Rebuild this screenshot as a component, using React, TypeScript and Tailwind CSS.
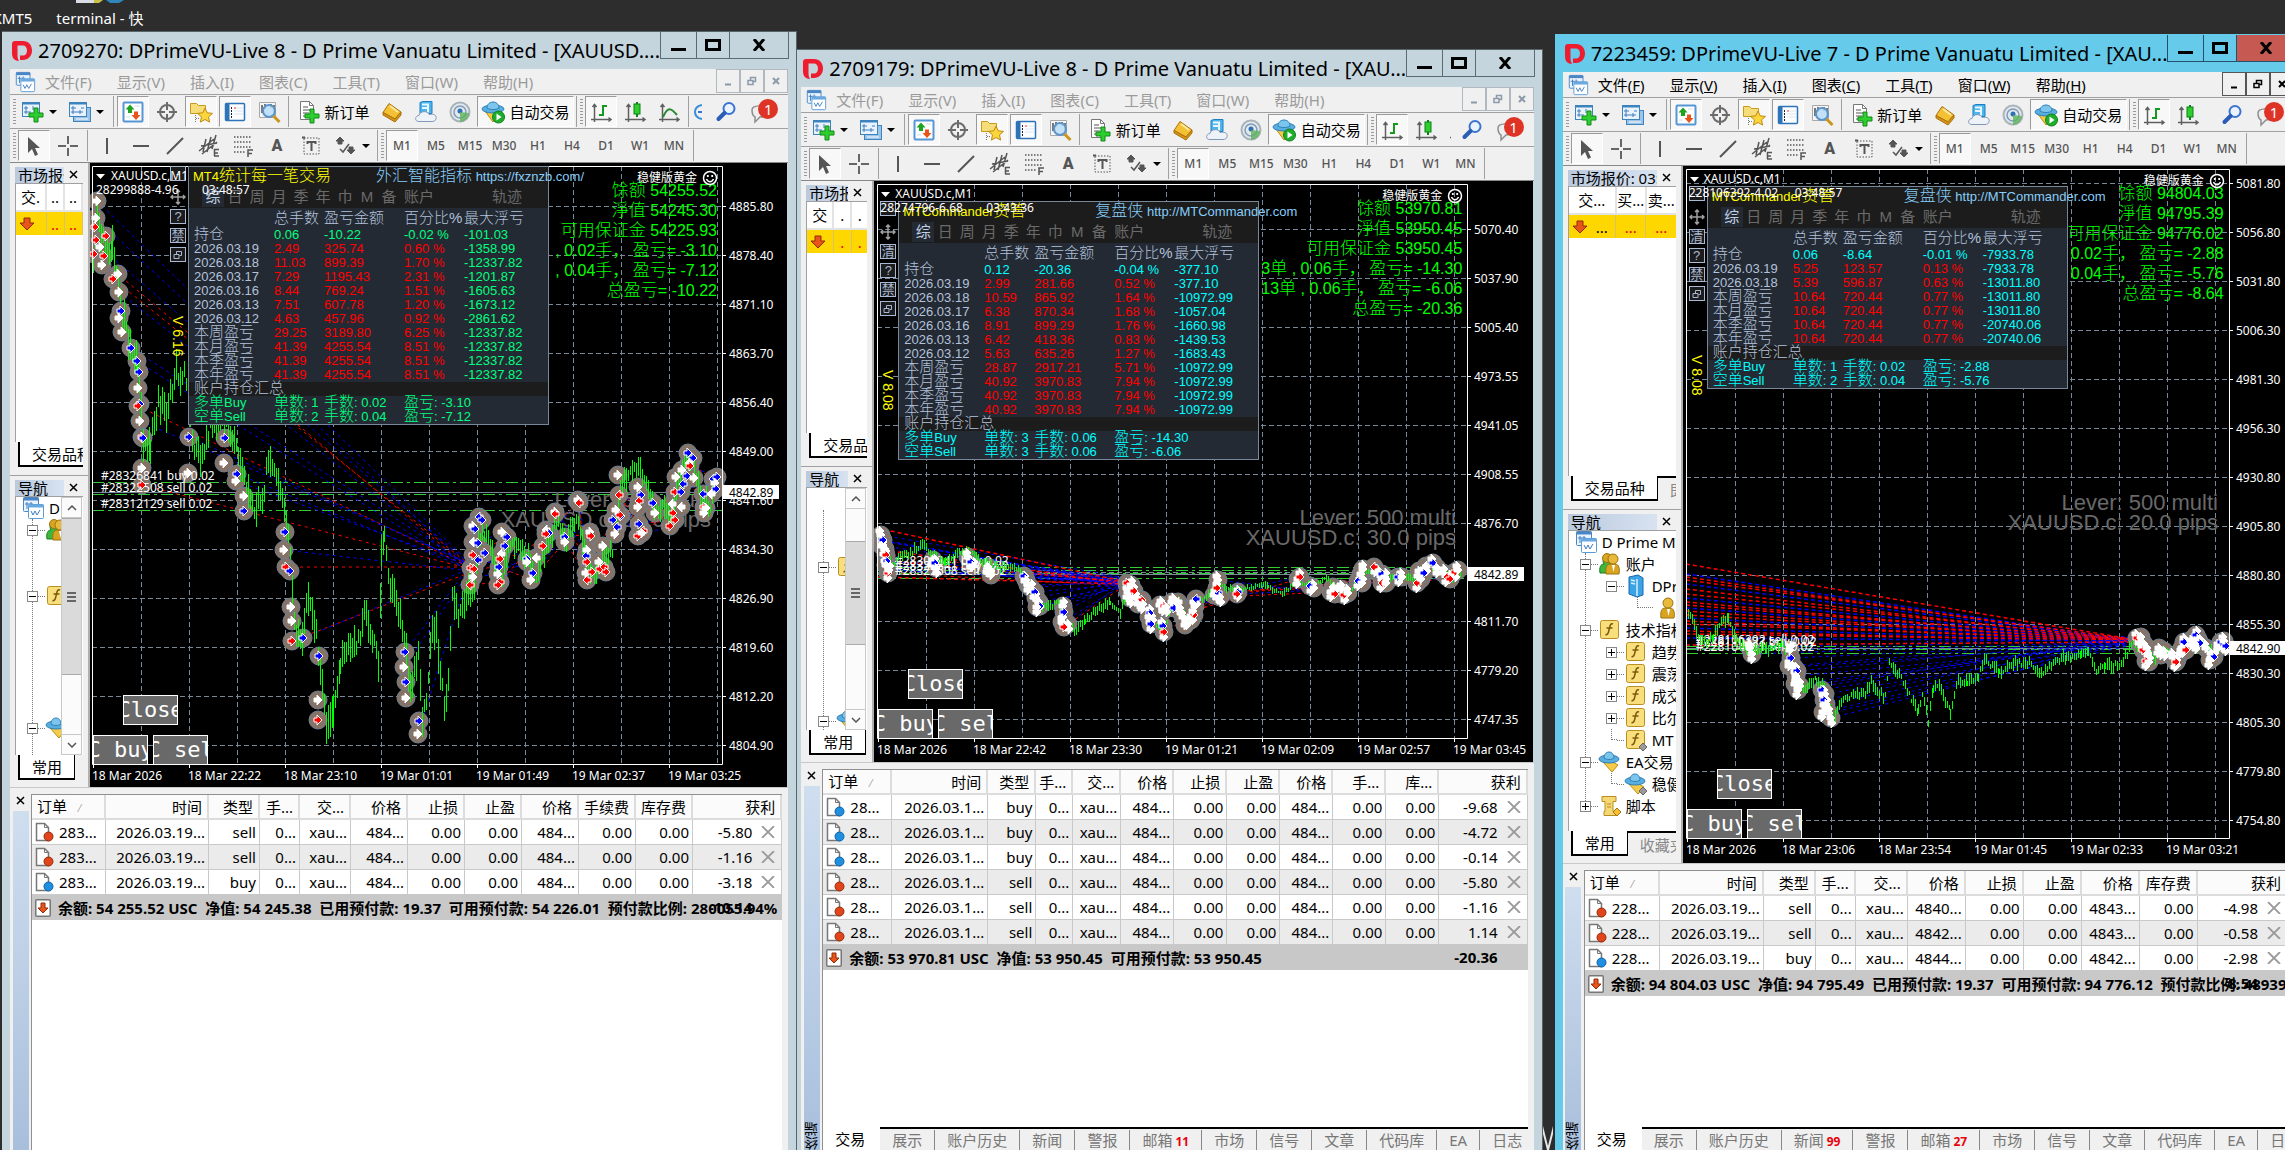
import React from 'react';
import clsx from 'clsx';

type Hue = 'b' | 'r' | 'w';

interface Marker {
  x: number;
  y: number;
  hue: Hue;
}

interface ChartData {
  origin: [number, number];
  frame: { left: number; top: number; right: number; bottom: number };
  grid: { x: number; y: number };
  prices: string[];
  times: string[];
  timeStart: number;
  bid: { y: number; label: string };
  orderLines: number[];
  orderLabels: { y: number; text: string }[];
  orderX: number;
  path: string;
  spread: number;
  markers: string;
  dense: boolean;
  target: [number, number];
  fan: number[];
  lever: string[];
  leverY: number;
}

interface StatRow {
  label: string;
  lots: string;
  profit: string;
  percent: string;
  drawdown: string;
}

interface PanelData {
  place: string;
  title: string;
  brand: string;
  brandPlace: string;
  url: string;
  version: string;
  accent: string;
  tools: string[];
  rows: StatRow[];
  totals: string[][];
}

interface TreeNode {
  level: 0 | 1 | 2 | 3;
  icon?: 'terminal' | 'people' | 'server' | 'user' | 'func' | 'custom' | 'ea' | 'robot' | 'script';
  label?: string;
  sign?: '+' | '-';
}

interface Terminal {
  columns: { name: string; width: string }[];
  rows: string[][];
  summary: string;
  total: string;
  tabs: { name: string; count?: number }[];
}

interface WindowData {
  title: string;
  active: boolean;
  shell: string;
  body: string;
  dock: string;
  market: string;
  marketTitle: string;
  marketHead: string[];
  marketRow: string[];
  marketCols: string[];
  marketTabs: string[];
  tree: TreeNode[];
  treeOffset: string;
  thumb: string | null;
  navTabs: string[];
  chart: ChartData;
  panel: PanelData;
  symbol: string;
  ticket: string;
  clock: string;
  account: string[];
  terminal: Terminal;
}

const stat = (line: string): StatRow => {
  const [label, lots, profit, percent, drawdown] = line.split('|');
  return { label, lots, profit, percent, drawdown };
};

const cols = (spec: [string, string][]) => spec.map(([name, width]) => ({ name, width }));

const fullTree: TreeNode[] = [
  { level: 0, icon: 'terminal', label: 'D Prime MT4' },
  { level: 1, icon: 'people', label: '账户', sign: '-' },
  { level: 2, icon: 'server', label: 'DPrime', sign: '-' },
  { level: 3, icon: 'user' },
  { level: 1, icon: 'func', label: '技术指标', sign: '-' },
  { level: 2, icon: 'func', label: '趋势', sign: '+' },
  { level: 2, icon: 'func', label: '震荡', sign: '+' },
  { level: 2, icon: 'func', label: '成交', sign: '+' },
  { level: 2, icon: 'func', label: '比尔', sign: '+' },
  { level: 2, icon: 'custom', label: 'MT' },
  { level: 1, icon: 'ea', label: 'EA交易', sign: '-' },
  { level: 2, icon: 'robot', label: '稳健' },
  { level: 1, icon: 'script', label: '脚本', sign: '+' },
];

const bottomTabs = (news?: number, mail?: number) => [
  { name: '交易' },
  { name: '展示' },
  { name: '账户历史' },
  { name: '新闻', count: news },
  { name: '警报' },
  { name: '邮箱', count: mail },
  { name: '市场' },
  { name: '信号' },
  { name: '文章' },
  { name: '代码库' },
  { name: 'EA' },
  { name: '日志' },
];

const windows: WindowData[] = [
  {
    title: '2709270: DPrimeVU-Live 8 - D Prime Vanuatu Limited - [XAUUSD....',
    active: false,
    shell: 'z-10 ml-[2px] mt-[31px] flex-[795]',
    body: 'h-[624px]',
    dock: 'w-[80px]',
    market: 'h-[313px]',
    marketTitle: '市场报价',
    marketHead: ['交.', '..', '..'],
    marketRow: ['', '..', '..'],
    marketCols: ['w-[30px]', 'w-[18px]', 'w-[18px]'],
    marketTabs: ['交易品种'],
    tree: [
      { level: 0, icon: 'terminal', label: 'D' },
      { level: 1, icon: 'people', sign: '-' },
      { level: 3 },
      { level: 3 },
      { level: 1, icon: 'func', sign: '-' },
      { level: 3 },
      { level: 3 },
      { level: 3 },
      { level: 3 },
      { level: 3 },
      { level: 1, icon: 'ea', sign: '-' },
      { level: 3 },
    ],
    treeOffset: 'pt-0',
    thumb: 'h-[157px]',
    navTabs: ['常用'],
    chart: {
      origin: [90, 163],
      frame: { left: 92, top: 166, right: 722, bottom: 764 },
      grid: { x: 141, y: 206 },
      prices: ['4885.80', '4878.40', '4871.10', '4863.70', '4856.40', '4849.00', '4841.60', '4834.30', '4826.90', '4819.60', '4812.20', '4804.90'],
      times: ['18 Mar 2026', '18 Mar 22:22', '18 Mar 23:10', '19 Mar 01:01', '19 Mar 01:49', '19 Mar 02:37', '19 Mar 03:25'],
      timeStart: 93,
      bid: { y: 492, label: '4842.89' },
      orderLines: [482, 494, 510],
      orderLabels: [
        { y: 480, text: '#28326841 buy 0.02' },
        { y: 492, text: '#28322508 sell 0.02' },
        { y: 508, text: '#28312129 sell 0.02' },
      ],
      orderX: 101,
      path: '93,260 97,215 103,240 112,250 118,285 122,315 130,345 137,365 141,400 143,440 150,445 158,400 166,415 176,370 188,380 192,440 200,460 210,425 218,415 228,425 238,455 246,485 254,505 262,500 268,460 274,470 282,500 290,550 294,620 300,645 308,595 316,635 322,680 326,725 333,705 340,660 350,645 360,640 364,605 372,635 378,660 381,560 384,540 390,590 396,600 404,640 410,690 418,650 422,725 426,700 430,640 436,625 440,680 444,705 448,680 452,590 458,620 466,590 474,590 478,540 486,530 494,560 502,580 508,540 516,545 528,560 536,580 548,540 558,520 566,540 576,520 584,550 592,575 602,560 612,550 620,490 626,475 632,465 640,470 648,490 656,510 664,505 670,520 678,480 686,460 694,465 702,500 710,505 716,480',
      spread: 32,
      markers:
        '97,201w 96,218w 95,227r 96,240r 106,236r 100,247w 94,254r 104,256r 102,265w 118,274w 113,279r 119,292w 121,311b 119,318w 122,332w 131,348b 137,361b 139,372b 138,388w 140,404b 138,406r 140,421w 142,437r 143,438b 142,468w 142,485r 189,437b 188,473w 225,438b 224,463w 237,474b 236,481w 244,496w 244,511b 285,532b 284,550w 286,567r 290,571b 291,607w 292,621w 292,641r 303,638b 319,656b 318,700w 318,720r 405,652b 404,667w 406,682b 406,698w 419,721b 418,734w 479,517b 482,520b 473,526w 475,529b 473,542w 478,543b 473,555r 485,553b 478,560b 471,568r 474,569r 473,577w 470,585r 502,532w 507,537b 505,546b 501,554w 500,559r 499,567b 498,574w 500,582r 498,585r 527,559b 527,562w 536,558w 533,573b 531,580w 543,546r 546,530w 549,533b 546,534r 555,512w 555,514r 565,537b 565,542w 578,500w 579,503r 590,532w 591,536r 587,550w 586,556b 587,562r 586,573w 592,572r 587,580r 603,546w 599,562w 600,569r 604,567r 606,572r 613,520b 621,516b 617,527b 615,534w 620,515r 616,510w 619,495r 618,475w 638,487w 641,495b 639,501r 638,507w 639,524b 638,536r 643,531r 642,533w 653,503b 655,513w 672,504w 673,513r 675,520r 670,526r 681,507w 676,477w 675,492r 681,492b 683,484b 682,470w 688,453b 693,458b 689,463w 690,466r 687,476b 694,478w 703,494b 704,507r 706,508w 704,513w 713,479b 717,477b 715,483w 716,489b 711,494w',
      dense: false,
      target: [471, 568],
      fan: [],
      lever: ['Lever: 500 multi', 'XAUUSD.c: 30.0 pips'],
      leverY: 507,
    },
    panel: {
      place: 'left-[80px] top-[3px]',
      title: 'MT4统计每一笔交易',
      brand: '外汇智能指标',
      brandPlace: 'left-[187px]',
      url: 'https://fxznzb.com/',
      version: 'V 6.16',
      accent: 'text-[#00ff7f]',
      tools: ['-', 'move', '?', '禁', 'restore'],
      rows: [
        '持仓|0.06|-10.22|-0.02 %|-101.03',
        '2026.03.19|2.49|325.74|0.60 %|-1358.99',
        '2026.03.18|11.03|899.39|1.70 %|-12337.82',
        '2026.03.17|7.29|1195.43|2.31 %|-1201.87',
        '2026.03.16|8.44|769.24|1.51 %|-1605.63',
        '2026.03.13|7.51|607.78|1.20 %|-1673.12',
        '2026.03.12|4.63|457.96|0.92 %|-2861.62',
        '本周盈亏|29.25|3189.80|6.25 %|-12337.82',
        '本月盈亏|41.39|4255.54|8.51 %|-12337.82',
        '本季盈亏|41.39|4255.54|8.51 %|-12337.82',
        '本年盈亏|41.39|4255.54|8.51 %|-12337.82',
      ].map(stat),
      totals: [
        ['多单Buy', '单数: 1', '手数: 0.02', '盈亏: -3.10'],
        ['空单Sell', '单数: 2', '手数: 0.04', '盈亏: -7.12'],
      ],
    },
    symbol: 'XAUUSD.c,M1',
    ticket: '28299888-4.96',
    clock: '03:48:57',
    account: ['馀额 54255.52', '淨值 54245.30', '可用保证金 54225.93', ', 0.02手， 盈亏= -3.10', ', 0.04手， 盈亏= -7.12', '总盈亏= -10.22'],
    terminal: {
      columns: cols([
        ['订单', 'w-[74px]'],
        ['时间', 'w-[103px]'],
        ['类型', 'w-[51px]'],
        ['手...', 'w-[40px]'],
        ['交...', 'w-[51px]'],
        ['价格', 'w-[57px]'],
        ['止损', 'w-[57px]'],
        ['止盈', 'w-[57px]'],
        ['价格', 'w-[57px]'],
        ['手续费', 'w-[57px]'],
        ['库存费', 'w-[57px]'],
        ['获利', 'w-auto'],
      ]),
      rows: [
        ['283...', '2026.03.19...', 'sell', '0...', 'xau...', '484...', '0.00', '0.00', '484...', '0.00', '0.00', '-5.80'],
        ['283...', '2026.03.19...', 'sell', '0...', 'xau...', '484...', '0.00', '0.00', '484...', '0.00', '0.00', '-1.16'],
        ['283...', '2026.03.19...', 'buy', '0...', 'xau...', '484...', '0.00', '0.00', '484...', '0.00', '0.00', '-3.18'],
      ],
      summary: '余额: 54 255.52 USC  净值: 54 245.38  已用预付款: 19.37  可用预付款: 54 226.01  预付款比例: 280055.94%',
      total: '-10.14',
      tabs: [],
    },
  },
  {
    title: '2709179: DPrimeVU-Live 8 - D Prime Vanuatu Limited - [XAU...',
    active: false,
    shell: '-ml-[4px] mt-[49px] flex-[749]',
    body: 'h-[581px]',
    dock: 'w-[73px]',
    market: 'h-[286px]',
    marketTitle: '市场报价',
    marketHead: ['交', '.', '.'],
    marketRow: ['', '.', '.'],
    marketCols: ['w-[26px]', 'w-[18px]', 'w-[17px]'],
    marketTabs: ['交易品种'],
    tree: [
      { level: 3 },
      { level: 3 },
      { level: 3 },
      { level: 1, icon: 'func', sign: '-' },
      { level: 3 },
      { level: 3 },
      { level: 3 },
      { level: 3 },
      { level: 3 },
      { level: 3 },
      { level: 1, icon: 'ea', sign: '-' },
    ],
    treeOffset: 'pt-[2px]',
    thumb: 'mt-[32px] h-[104px]',
    navTabs: ['常用'],
    chart: {
      origin: [874, 181],
      frame: { left: 877, top: 184, right: 1467, bottom: 738 },
      grid: { x: 926, y: 229 },
      prices: ['5070.40', '5037.90', '5005.40', '4973.55', '4941.05', '4908.55', '4876.70', '', '4811.70', '4779.20', '4747.35'],
      times: ['18 Mar 2026', '18 Mar 22:42', '18 Mar 23:30', '19 Mar 01:21', '19 Mar 02:09', '19 Mar 02:57', '19 Mar 03:45'],
      timeStart: 878,
      bid: { y: 574, label: '4842.89' },
      orderLines: [567, 570, 573, 578],
      orderLabels: [
        { y: 565, text: '#28309341 buy 0.02' },
        { y: 570, text: '#28326841 buy 0.02' },
        { y: 575, text: '#28322508 sell 0.02' },
      ],
      orderX: 895,
      path: '878,535 886,550 892,565 900,556 912,552 922,542 930,555 945,562 960,552 966,550 980,560 1000,567 1020,570 1032,592 1042,606 1052,606 1058,600 1064,620 1074,630 1085,620 1095,610 1110,602 1120,612 1130,582 1140,600 1150,615 1163,636 1172,605 1178,600 1188,622 1196,600 1206,598 1214,585 1235,590 1255,586 1268,586 1282,594 1296,582 1312,586 1326,578 1340,592 1350,592 1362,575 1376,568 1390,578 1402,576 1416,580 1430,566 1442,570 1452,578 1462,574',
      spread: 10,
      markers:
        '881,535w 883,540b 882,546w 885,549w 886,555r 887,561b 886,565w 888,573r 889,570w 933,560w 935,563b 936,568w 968,557w 971,562b 973,566w 988,567w 991,575w 1024,576b 1026,580w 1028,585w 1031,588w 1035,592b 1036,598w 1039,602w 1040,606b 1037,607w 1063,606w 1064,612b 1062,622w 1068,624w 1064,627r 1127,583r 1131,585w 1128,592w 1134,591r 1130,598w 1137,598w 1142,600r 1138,604w 1143,604w 1150,613b 1149,617w 1153,620w 1151,624b 1160,605w 1164,606r 1163,611w 1166,607w 1163,626b 1164,632r 1172,602w 1178,602w 1174,608b 1180,608w 1183,617w 1187,620w 1185,625w 1194,615r 1191,620w 1196,599b 1195,606w 1193,611w 1214,595w 1218,593b 1217,588r 1220,597w 1218,580w 1238,592b 1237,594r 1298,579w 1300,577r 1310,586b 1314,588w 1331,592w 1335,594r 1333,587w 1341,589w 1344,595r 1348,593w 1358,581b 1362,583w 1361,574w 1363,569w 1374,567r 1378,573w 1382,574b 1385,577w 1382,583r 1386,583w 1398,577b 1402,577w 1417,583r 1421,579w 1419,571w 1424,573b 1426,566w 1433,563b 1437,568w 1443,573w 1447,577r 1450,579r 1455,572r 1458,570w',
      dense: true,
      target: [1127, 582],
      fan: [528, 540, 549, 560, 568, 577],
      lever: ['Lever: 500 multi', 'XAUUSD.c: 30.0 pips'],
      leverY: 525,
    },
    panel: {
      place: 'left-[6px] top-[20px]',
      title: 'MTCommander资管',
      brand: '复盘侠',
      brandPlace: 'left-[196px]',
      url: 'http://MTCommander.com',
      version: 'V 8.08',
      accent: 'text-[#00ffff]',
      tools: ['-', 'move', '清', '?', '禁', 'restore'],
      rows: [
        '持仓|0.12|-20.36|-0.04 %|-377.10',
        '2026.03.19|2.99|281.66|0.52 %|-377.10',
        '2026.03.18|10.59|865.92|1.64 %|-10972.99',
        '2026.03.17|6.38|870.34|1.68 %|-1057.04',
        '2026.03.16|8.91|899.29|1.76 %|-1660.98',
        '2026.03.13|6.42|418.36|0.83 %|-1439.53',
        '2026.03.12|5.63|635.26|1.27 %|-1683.43',
        '本周盈亏|28.87|2917.21|5.71 %|-10972.99',
        '本月盈亏|40.92|3970.83|7.94 %|-10972.99',
        '本季盈亏|40.92|3970.83|7.94 %|-10972.99',
        '本年盈亏|40.92|3970.83|7.94 %|-10972.99',
      ].map(stat),
      totals: [
        ['多单Buy', '单数: 3', '手数: 0.06', '盈亏: -14.30'],
        ['空单Sell', '单数: 3', '手数: 0.06', '盈亏: -6.06'],
      ],
    },
    symbol: 'XAUUSD.c,M1',
    ticket: '28274796-6.68',
    clock: '03:43:36',
    account: ['馀额 53970.81', '淨值 53950.45', '可用保证金 53950.45', '3单 , 0.06手， 盈亏= -14.30', '13单 , 0.06手， 盈亏= -6.06', '总盈亏= -20.36'],
    terminal: {
      columns: cols([
        ['订单', 'w-[69px]'],
        ['时间', 'w-[96px]'],
        ['类型', 'w-[48px]'],
        ['手...', 'w-[37px]'],
        ['交...', 'w-[48px]'],
        ['价格', 'w-[53px]'],
        ['止损', 'w-[53px]'],
        ['止盈', 'w-[53px]'],
        ['价格', 'w-[53px]'],
        ['手...', 'w-[53px]'],
        ['库...', 'w-[53px]'],
        ['获利', 'w-auto'],
      ]),
      rows: [
        ['buy', '-9.68'],
        ['buy', '-4.72'],
        ['buy', '-0.14'],
        ['sell', '-5.80'],
        ['sell', '-1.16'],
        ['sell', '1.14'],
      ].map(([side, profit]) => ['28...', '2026.03.1...', side, '0...', 'xau...', '484...', '0.00', '0.00', '484...', '0.00', '0.00', profit]),
      summary: '余额: 53 970.81 USC  净值: 53 950.45  可用预付款: 53 950.45',
      total: '-20.36',
      tabs: bottomTabs(undefined, 11),
    },
  },
  {
    title: '7223459: DPrimeVU-Live 7 - D Prime Vanuatu Limited - [XAU...',
    active: true,
    shell: '-mr-[18px] ml-[12px] mt-[34px] flex-[749]',
    body: 'h-[697px]',
    dock: 'w-[120px]',
    market: 'h-[344px]',
    marketTitle: '市场报价: 03:48',
    marketHead: ['交...', '买...', '卖...'],
    marketRow: ['...', '...', '...'],
    marketCols: ['w-[47px]', 'w-[30px]', 'w-[31px]'],
    marketTabs: ['交易品种', '即时图'],
    tree: fullTree,
    treeOffset: 'pt-0',
    thumb: null,
    navTabs: ['常用', '收藏夹'],
    chart: {
      origin: [1682, 166],
      frame: { left: 1685, top: 169, right: 2228, bottom: 838 },
      grid: { x: 1734, y: 183 },
      prices: ['5081.80', '5056.80', '5031.80', '5006.30', '4981.30', '4956.30', '4930.80', '4905.80', '4880.80', '4855.30', '4830.30', '4805.30', '4779.80', '4754.80'],
      times: ['18 Mar 2026', '18 Mar 23:06', '18 Mar 23:54', '19 Mar 01:45', '19 Mar 02:33', '19 Mar 03:21'],
      timeStart: 1686,
      bid: { y: 648, label: '4842.90' },
      orderLines: [646, 649, 653],
      orderLabels: [
        { y: 644, text: '#228106392 sell 0.02' },
        { y: 646, text: '#228110123 buy 0.02' },
        { y: 651, text: '#228104081 sell 0.02' },
      ],
      orderX: 1695,
      path: '1687,612 1695,632 1703,642 1712,636 1720,622 1727,618 1735,640 1748,648 1765,650 1780,645 1788,652 1796,680 1804,690 1815,680 1823,690 1832,718 1842,700 1854,694 1864,695 1870,682 1878,692 1884,697 1888,664 1896,672 1904,685 1910,700 1917,712 1921,692 1927,722 1932,688 1938,684 1949,712 1957,680 1966,682 1977,676 1983,660 1998,672 2014,662 2028,664 2040,674 2054,660 2065,657 2080,655 2087,652 2095,670 2104,666 2120,665 2130,644 2142,650 2154,658 2166,650 2176,660 2184,645 2196,635 2206,650 2216,648 2226,645',
      spread: 12,
      markers:
        '1749,648w 1751,654w 1789,650w 1790,658b 1788,666w 1793,667w 1796,671b 1795,676w 1794,684w 1797,690w 1799,686w 1821,690b 1824,694w 1823,700b 1825,704w 1822,712w 1828,713w 1830,718w 2136,638r 2140,637w 2138,643w 2143,644w 2142,650r 2146,648w 2147,655w 2145,661r 2148,662w 2158,648w 2160,655w 2163,651w 2172,657w 2176,660w 2179,654w 2175,662r 2183,642b 2181,648w 2185,650r 2190,640w 2195,635b 2197,639w 2199,643b 2194,644w 2205,648w 2210,653w 2213,657b 2209,660w 2217,648w 2220,642b 2223,641w 2225,646b',
      dense: true,
      target: [2136, 640],
      fan: [564, 574, 577, 580, 584, 589, 594, 598, 602, 605, 608, 611, 615, 618, 621, 624, 628, 631, 634, 638, 645],
      lever: ['Lever: 500 multi', 'XAUUSD.c: 20.0 pips'],
      leverY: 510,
    },
    panel: {
      place: 'left-[6px] top-[20px]',
      title: 'MTCommander资管',
      brand: '复盘侠',
      brandPlace: 'left-[196px]',
      url: 'http://MTCommander.com',
      version: 'V 8.08',
      accent: 'text-[#00ffff]',
      tools: ['-', 'move', '清', '?', '禁', 'restore'],
      rows: [
        '持仓|0.06|-8.64|-0.01 %|-7933.78',
        '2026.03.19|5.25|123.57|0.13 %|-7933.78',
        '2026.03.18|5.39|596.87|0.63 %|-13011.80',
        '本周盈亏|10.64|720.44|0.77 %|-13011.80',
        '本月盈亏|10.64|720.44|0.77 %|-13011.80',
        '本季盈亏|10.64|720.44|0.77 %|-20740.06',
        '本年盈亏|10.64|720.44|0.77 %|-20740.06',
      ].map(stat),
      totals: [
        ['多单Buy', '单数: 1', '手数: 0.02', '盈亏: -2.88'],
        ['空单Sell', '单数: 2', '手数: 0.04', '盈亏: -5.76'],
      ],
    },
    symbol: 'XAUUSD.c,M1',
    ticket: '228106392-4.02',
    clock: '03:48:57',
    account: ['馀额 94804.03', '淨值 94795.39', '可用保证金 94776.02', '0.02手， 盈亏= -2.88', '0.04手， 盈亏= -5.76', '总盈亏= -8.64'],
    terminal: {
      columns: cols([
        ['订单', 'w-[75px]'],
        ['时间', 'w-[104px]'],
        ['类型', 'w-[52px]'],
        ['手...', 'w-[40px]'],
        ['交...', 'w-[52px]'],
        ['价格', 'w-[58px]'],
        ['止损', 'w-[58px]'],
        ['止盈', 'w-[58px]'],
        ['价格', 'w-[58px]'],
        ['库存费', 'w-[58px]'],
        ['获利', 'w-auto'],
      ]),
      rows: [
        ['228...', '2026.03.19...', 'sell', '0...', 'xau...', '4840...', '0.00', '0.00', '4843...', '0.00', '-4.98'],
        ['228...', '2026.03.19...', 'sell', '0...', 'xau...', '4842...', '0.00', '0.00', '4843...', '0.00', '-0.58'],
        ['228...', '2026.03.19...', 'buy', '0...', 'xau...', '4844...', '0.00', '0.00', '4842...', '0.00', '-2.98'],
      ],
      summary: '余额: 94 804.03 USC  净值: 94 795.49  已用预付款: 19.37  可用预付款: 94 776.12  预付款比例: 489393%',
      total: '-8.54',
      tabs: bottomTabs(99, 27),
    },
  },
];

const menu = [
  ['文件', 'F'],
  ['显示', 'V'],
  ['插入', 'I'],
  ['图表', 'C'],
  ['工具', 'T'],
  ['窗口', 'W'],
  ['帮助', 'H'],
];

const frames = ['M1', 'M5', 'M15', 'M30', 'H1', 'H4', 'D1', 'W1', 'MN'];

const pressed = 'border border-t-[#9a9a9a] border-l-[#9a9a9a] border-r-white border-b-white bg-[#f8f8f8]';

/* ---------- icons ---------- */

const Svg = ({ size = 'h-6 w-6', children }: { size?: string; children: React.ReactNode }) => (
  <svg viewBox="0 0 24 24" fill="none" className={clsx('shrink-0', size)} aria-hidden="true">
    {children}
  </svg>
);

const Logo = () => (
  <svg viewBox="0 0 20 20" className="h-5 w-5 shrink-0" aria-hidden="true">
    <path fillRule="evenodd" d="M3 0h8c5.500 0 9 4 9 9.500S16 19 11 19H8v-4.500h3c2.600 0 4-2 4-5s-1.500-5-4-5H5.500v10c0 2 .5 4 1.500 5.500C2 19.500 0 17 0 12V3c0-2 1-3 3-3z" fill="#ee1c2e" />
  </svg>
);

const ChartWindows = ({ size }: { size?: string }) => (
  <Svg size={size}>
    <rect x="2.500" y="1.500" width="15" height="14" rx="1" fill="#e8f2fc" stroke="#4a86c5" />
    <path d="M2.500 3h15" stroke="#4a86c5" strokeWidth="3" />
    <path d="M6 6v7M4 8h8M10 6v4" stroke="#3f7cc0" />
    <rect x="7.500" y="8.500" width="15" height="14" rx="1" fill="#fff" stroke="#5b9bd8" />
    <path d="M7.500 10h15" stroke="#6aa8e0" strokeWidth="3" />
    <path d="M10 15l2 4 2-4 2 4 3-5" stroke="#3f7cc0" />
  </Svg>
);

const NewChart = () => (
  <Svg>
    <rect x="1.500" y="2.500" width="17" height="14" fill="#eaf3fb" stroke="#3d83bd" />
    <path d="M1 3.500h18" stroke="#3d83bd" strokeWidth="2" />
    <path d="M5 6v8M3 12h7M3 8h4M12 6v4" stroke="#3f7cc0" />
    <path d="M13 8h4v5h5v4h-5v5h-4v-5H8v-4h5z" fill="#2fce2f" stroke="#0f8a18" />
  </Svg>
);

const Profiles = () => (
  <Svg>
    <rect x="5.500" y="7.500" width="17" height="14" fill="#9cc4e8" stroke="#3d83bd" />
    <rect x="1.500" y="2.500" width="17" height="14" fill="#eaf3fb" stroke="#3d83bd" />
    <path d="M1 3.500h18" stroke="#3d83bd" strokeWidth="2" />
    <path d="M5 6v8M3 8h5M3 12h12M12 10v4M13 8h3" stroke="#3f7cc0" />
    <path d="M8 19h12" stroke="#fff" />
  </Svg>
);

const Quotes = () => (
  <Svg>
    <rect x="2.500" y="2.500" width="19" height="19" rx="1" fill="#fff" stroke="#5596d4" strokeWidth="2" />
    <path d="M9 4.500l4.500 5H11V13H7V9.500H4.500z" fill="#1da31d" />
    <path d="M15 20l-4.500-5H13v-3.500h4V15h2.500z" fill="#e8541a" />
    <path d="M14 6h5M5 17h4" stroke="#cfdce8" />
  </Svg>
);

const Target = () => (
  <Svg>
    <circle cx="12" cy="12" r="7" stroke="#6b6b6b" strokeWidth="2" />
    <path d="M12 2v8M12 14v8M2 12h8M14 12h8" stroke="#6b6b6b" strokeWidth="2" />
  </Svg>
);

const FolderStar = () => (
  <Svg>
    <path d="M1.500 3.500h6l2 2h7v8h-15z" fill="#f7dc7a" stroke="#c79a1c" />
    <path d="M6.500 15v8M7 18.500h4" stroke="#777" strokeDasharray="1 1" />
    <path d="M16 8l2.200 4.800 5.300.6-4 3.500 1.100 5.200-4.600-2.600-4.600 2.600 1.100-5.200-4-3.500 5.300-.6z" fill="#fbd53c" stroke="#c08a10" />
  </Svg>
);

const DataWindow = () => (
  <Svg>
    <rect x="2.500" y="3.500" width="19" height="17" rx="1" fill="#fbfdff" stroke="#2e73b8" strokeWidth="1.500" />
    <path d="M4.500 4v16" stroke="#2e73b8" strokeWidth="4" />
    <path d="M8 8h1M8 11h1M8 14h1M8 17h1" stroke="#222" strokeWidth="2" />
    <path d="M11 8h2" stroke="#e33" />
    <path d="M13 8h7M11 11h9M11 14h9" stroke="#dfe7f0" />
  </Svg>
);

const Tester = () => (
  <Svg>
    <path d="M2.500 2.500h16v15h-16z" fill="#f6f6f6" stroke="#a8a8a8" />
    <path d="M5 5v8M8 4v5M14 4v4M17 5v8" stroke="#777" strokeWidth="2" />
    <circle cx="12" cy="11" r="6" fill="#b9dcf7" fillOpacity=".85" stroke="#5b94c9" strokeWidth="2" />
    <path d="M16.500 16l6 6" stroke="#c9951d" strokeWidth="3" />
  </Svg>
);

const NewOrder = () => (
  <Svg>
    <path d="M3.500 1.500h9l4 4v14h-13z" fill="#fff" stroke="#777" />
    <path d="M12.500 1.500v4h4" stroke="#777" />
    <path d="M6 7h5M6 10h8M6 13h6M6 16h3" stroke="#555" />
    <path d="M13 9h4v5h5v4h-5v5h-4v-5H8v-4h5z" fill="#2fce2f" stroke="#0f8a18" />
  </Svg>
);

const Book = () => (
  <Svg>
    <path d="M9 3.500l12 8.500-6 7L3 12.500z" fill="#f4c034" stroke="#a8720c" />
    <path d="M3 12.500L15 19l6-7v3l-6 7-12-7z" fill="#d99414" stroke="#a8720c" />
    <path d="M10 6l8 6" stroke="#fce9a0" strokeWidth="2" />
  </Svg>
);

const CloudServer = () => (
  <Svg>
    <path d="M6 2.500l3-1h9v12H6z" fill="#4db4ee" stroke="#1d7fc0" />
    <path d="M8 4.500h6v8M8 8h6" stroke="#e8f7ff" strokeWidth="2" />
    <path d="M5 21.500c-5 0-4-6 0-6 1-5 9-5 10-1 5-1 8 1 7 4 0 2-2 3-4 3z" fill="#eef3f9" stroke="#8296b5" />
  </Svg>
);

const Signal = () => (
  <Svg>
    <circle cx="12" cy="12" r="9.500" fill="#e4e8ea" stroke="#a9b3ba" strokeWidth="2" />
    <circle cx="12" cy="12" r="6" stroke="#7d9cc0" strokeWidth="1.500" />
    <circle cx="12" cy="11" r="2.500" fill="#2f6fb8" />
    <path d="M12 12v10c6-1 9-5 9-9z" fill="#5db35a" fillOpacity=".8" />
  </Svg>
);

const Hat = ({ play = false, size }: { play?: boolean; size?: string }) => (
  <Svg size={size}>
    <path d="M4 11l8 11 9-9z" fill="#f4cc48" stroke="#bb8c14" />
    <ellipse cx="12" cy="9" rx="11" ry="4" fill="#58aee0" stroke="#2d7fb5" />
    <path d="M6 8c0-8 12-8 12 0-3 2-9 2-12 0z" fill="#7cc6ee" stroke="#2d7fb5" />
    {play && (
      <>
        <circle cx="17.500" cy="17" r="6" fill="#1fae2c" stroke="#0f8018" />
        <path d="M15.500 13.500l5 3.500-5 3.500z" fill="#fff" />
      </>
    )}
  </Svg>
);

const AxisIcon = ({ kind }: { kind: 'bar' | 'candle' | 'line' }) => (
  <Svg>
    <path d="M5.500 5v17M2 19.500h20M3.500 7l2-2.500 2 2.500M19.500 17.500l2.500 2-2.500 2" stroke="#5f5f5f" strokeWidth="1.500" />
    {kind === 'bar' && <path d="M14 5v11M14 6h4M10 15h4" stroke="#149a1e" strokeWidth="2" />}
    {kind === 'candle' && (
      <>
        <path d="M14 2v15" stroke="#0f8018" strokeWidth="2" />
        <rect x="11" y="4" width="6" height="10" fill="#2fce2f" stroke="#0f8018" />
      </>
    )}
    {kind === 'line' && <path d="M6 17c5-11 8-9 14-2" stroke="#2a8a34" strokeWidth="2" />}
  </Svg>
);

const SearchIcon = () => (
  <Svg>
    <circle cx="15" cy="8.500" r="5.500" fill="#eaf3ff" stroke="#3a74cf" strokeWidth="2" />
    <path d="M10.500 13L4.500 19" stroke="#2a5cb8" strokeWidth="4" strokeLinecap="round" />
  </Svg>
);

const Tool = ({ name }: { name: string }) => (
  <Svg>
    {name === 'cursor' && <path d="M6 3v16l4-4 3 7 3-1.500-3-6.500h5z" fill="#555" />}
    {name === 'cross' && <path d="M12 2v8M12 14v8M2 12h8M14 12h8" stroke="#666" strokeWidth="2" />}
    {name === 'vline' && <path d="M12 4v16" stroke="#555" strokeWidth="2" />}
    {name === 'hline' && <path d="M4 12h16" stroke="#555" strokeWidth="2" />}
    {name === 'trend' && <path d="M4 20L20 4" stroke="#555" strokeWidth="2" />}
    {name === 'channel' && (
      <path d="M2 17L17 5M5 20L20 8M9 5L6 18M14 3l-4 15M19 1l-4 14M4 12l16-3M17 15.500h5M17 19h4M17 22h5M17.500 15v7" stroke="#555" strokeWidth="1.500" />
    )}
    {name === 'fibo' && (
      <>
        <path d="M3 3h18M3 8h18M3 13h18M3 18h11" stroke="#555" strokeWidth="1.500" strokeDasharray="1.500 1.500" />
        <path d="M17 23v-7h5M17 19.500h4" stroke="#555" strokeWidth="1.500" />
      </>
    )}
    {name === 'label' && (
      <>
        <path d="M5 4h15v16H5z" stroke="#555" strokeDasharray="1.500 1.500" />
        <path d="M3 3.500h3M8 8h9M8.500 7v3M16.500 7v3M12.500 8v9" stroke="#555" strokeWidth="2" />
      </>
    )}
    {name === 'arrows' && (
      <>
        <path d="M7 3l4 4H9v3H5V7H3zM18 20l-4-4h2v-3h4v3h2z" fill="#555" stroke="#555" />
        <path d="M7 15l3 3 6-8" stroke="#555" strokeWidth="1.500" />
      </>
    )}
  </Svg>
);

const NodeIcon = ({ icon }: { icon: NonNullable<TreeNode['icon']> }) => {
  const gem = <path d="M19 15l4 4-4 4-4-4z" fill="#9a9a9a" stroke="#666" />;
  if (icon === 'terminal') return <ChartWindows />;
  if (icon === 'ea' || icon === 'robot') {
    return (
      <Svg>
        <path d="M5 12l9 10 6-7-7-4z" fill="#f4cc48" stroke="#bb8c14" />
        <ellipse cx="11" cy="9" rx="10" ry="4" fill="#58aee0" stroke="#2d7fb5" />
        <path d="M6 8c0-8 10-8 10 0-3 2-7 2-10 0z" fill="#7cc6ee" stroke="#2d7fb5" />
        {icon === 'robot' && gem}
      </Svg>
    );
  }
  return (
    <Svg>
      {(icon === 'people' || icon === 'user') && (
        <>
          {icon === 'people' && <path d="M2 21c-1-6 1-9 4-9-2-3-1-8 3-8s5 5 3 8l2 9z" fill="#3cb83c" stroke="#1d7a1d" />}
          {icon === 'people' && <circle cx="9" cy="6" r="4.500" fill="#d9a520" stroke="#9c7410" />}
          <path d="M8 22c-1-7 1-10 4-10h5c4 0 5 5 4 10z" fill="#d9a520" stroke="#9c7410" />
          <circle cx="15" cy="7" r="5" fill="#e8b93a" stroke="#9c7410" />
          <path d="M14 13l1.500 7 1.500-7z" fill="#fff" />
        </>
      )}
      {icon === 'server' && (
        <>
          <path d="M5 3l9-2 5 3v17l-6 2-8-3z" fill="#3aa3e6" stroke="#1769ac" />
          <path d="M13 5v17M7 6l4 1M7 9l4 1" stroke="#d8efff" strokeWidth="1.500" />
        </>
      )}
      {(icon === 'func' || icon === 'custom') && (
        <>
          <rect x="2.500" y="2.500" width="18" height="18" rx="2" fill="#f9df7c" stroke="#b88f1e" />
          <path d="M15 6c-2-1-3 1-3.500 4l-1 4c-.5 2-1.500 3-3 2.500M8.500 10h6" stroke="#7c5a0c" strokeWidth="1.500" />
        </>
      )}
      {icon === 'custom' && gem}
      {icon === 'script' && (
        <>
          <path d="M4 2.500h14v5h-3v10h3v4H6v-4h1v-10H4z" fill="#f6d775" stroke="#b88f1e" />
          <path d="M9 10h4M9 13h4" stroke="#b88f1e" />
          <path d="M19 14l4 4-4 4-4-4z" fill="#f4c034" stroke="#a8720c" />
        </>
      )}
    </Svg>
  );
};

const Caret = () => <span className="h-0 w-0 border-x-4 border-t-4 border-x-transparent border-t-black" />;

const Grip = () => (
  <span className="mx-px my-1 w-[3px] shrink-0 self-stretch bg-[repeating-linear-gradient(to_bottom,#999_0_1px,transparent_1px_3px)]" />
);

const Divider = () => <span className="mx-[2px] my-px w-px shrink-0 self-stretch bg-[#a0a0a0]" />;

/* ---------- window chrome ---------- */

function TitleBar({ title, active }: { title: string; active: boolean }) {
  const edge = active ? 'border-[#24506b]' : 'border-[#5c6a72]';
  return (
    <header className="flex h-[37px] shrink-0 items-start pl-[10px] pr-[7px]">
      <div className="flex h-[37px] min-w-0 flex-1 items-center gap-[6px]">
        <Logo />
        <h2 className="overflow-hidden whitespace-pre text-[20px] leading-[26px] text-black">{title}</h2>
      </div>
      <div className={clsx('flex h-[27px] shrink-0 border-x border-b', edge)}>
        <button aria-label="最小化" className={clsx('flex w-[36px] items-end justify-center border-r pb-[7px]', edge)}>
          <span className="h-[3px] w-[15px] bg-black" />
        </button>
        <button aria-label="最大化" className={clsx('flex w-[33px] items-center justify-center border-r', edge)}>
          <span className="h-[12px] w-[16px] border-[3px] border-black" />
        </button>
        <button aria-label="关闭" className={clsx('flex w-[58px] items-center justify-center', active && 'bg-[#c65a52]')}>
          <svg viewBox="0 0 14 12" className="h-3 w-[14px]">
            <path d="M2 0l10 12M12 0L2 12" stroke="#000" strokeWidth="3" />
          </svg>
        </button>
      </div>
    </header>
  );
}

function MenuBar({ active }: { active: boolean }) {
  return (
    <nav className={clsx('flex h-[26px] shrink-0 items-center border-b border-[#a0a0a0] bg-[#f0f0f0]', active ? 'text-black' : 'text-[#9a9a9a]')}>
      <div className="flex flex-1 items-center gap-[25px] overflow-hidden pl-[4px]">
        <span className="-mr-[16px] flex">
          <ChartWindows size="h-[22px] w-[22px]" />
        </span>
        {menu.map(([label, key]) => (
          <button key={key} className="whitespace-nowrap text-[15px] leading-5">
            {label}({active ? <u>{key}</u> : key})
          </button>
        ))}
      </div>
      {['min', 'restore', 'close'].map((name) => (
        <button
          key={name}
          aria-label={name}
          className={clsx('flex h-6 w-6 shrink-0 items-center justify-center self-start border bg-[#f0f0f0]', active ? 'border-[#555]' : 'border-[#b0b8c0]')}
        >
          <svg viewBox="0 0 10 10" fill="none" className="h-[10px] w-[10px]" stroke={active ? '#000' : '#8b99a8'} strokeWidth="1.500">
            {name === 'min' && <path d="M2 8.500h6" strokeWidth="2" />}
            {name === 'restore' && <path d="M1 4.500h5v4H1zM3.500 4V1.500h5v4H6.500" />}
            {name === 'close' && <path d="M2 2l6 6M8 2L2 8" strokeWidth="2" />}
          </svg>
        </button>
      ))}
    </nav>
  );
}

function IconButton({ on, label, children }: { on?: boolean; label: string; children: React.ReactNode }) {
  return (
    <span className="flex w-[34px] shrink-0 justify-center">
      <button aria-label={label} className={clsx('flex h-[31px] w-8 items-center justify-center', on && pressed)}>
        {children}
      </button>
    </span>
  );
}

function MainToolbar() {
  return (
    <div className="flex h-[34px] shrink-0 border-b border-[#a0a0a0] bg-[#f0f0f0]">
      <div className="flex min-w-0 flex-1 items-center overflow-hidden pl-[2px]">
        <Grip />
        {[NewChart, Profiles].map((Icon, i) => (
          <button key={i} aria-label={i ? '模板' : '新图表'} className="flex w-[47px] shrink-0 items-center gap-1 pl-[4px]">
            <Icon />
            <Caret />
          </button>
        ))}
        <Divider />
        <IconButton on label="市场报价"><Quotes /></IconButton>
        <IconButton label="数据窗口"><Target /></IconButton>
        <IconButton on label="导航"><FolderStar /></IconButton>
        <IconButton on label="终端"><DataWindow /></IconButton>
        <IconButton label="策略测试"><Tester /></IconButton>
        <Divider />
        <button className="ml-[6px] mr-[4px] flex shrink-0 items-center gap-[2px] whitespace-nowrap text-[15px] leading-5">
          <NewOrder />
          <span className="w-12">新订单</span>
        </button>
        <IconButton label="编辑器"><Book /></IconButton>
        <IconButton label="云"><CloudServer /></IconButton>
        <IconButton label="信号"><Signal /></IconButton>
        <button className={clsx('flex h-[31px] shrink-0 items-center gap-[4px] whitespace-nowrap px-[3px] text-[15px] leading-5', pressed)}>
          <Hat play />
          <span className="w-[61px]">自动交易</span>
        </button>
        <Divider />
        <Grip />
        <IconButton on label="柱状图"><AxisIcon kind="bar" /></IconButton>
        <IconButton label="蜡烛图"><AxisIcon kind="candle" /></IconButton>
        <IconButton label="折线图"><AxisIcon kind="line" /></IconButton>
        <Divider />
        <svg viewBox="0 0 8 16" fill="none" className="ml-[3px] h-4 w-2 shrink-0">
          <path d="M8 1C3 2 1 5 1 8s2 6 7 7" stroke="#3a8fd8" strokeWidth="2" />
          <path d="M4 8h4" stroke="#3a74cf" strokeWidth="2" />
        </svg>
      </div>
      <div className="flex w-[83px] shrink-0 items-center gap-[10px] pl-[9px]">
        <button aria-label="搜索"><SearchIcon /></button>
        <button aria-label="消息" className="relative">
          <svg viewBox="0 0 32 28" fill="none" className="h-7 w-8">
            <path d="M4 12c0-5 14-6 16 0 1 5-4 7-8 7l-5 5v-5c-2-1-3-4-3-7z" fill="#eee" stroke="#8d8d8d" strokeWidth="1.500" />
            <circle cx="20" cy="11" r="10" fill="#df3325" />
          </svg>
          <span className="absolute right-[2px] top-px w-5 text-center text-[15px] leading-5 text-white">1</span>
        </button>
      </div>
    </div>
  );
}

function DrawToolbar() {
  return (
    <div className="flex h-[34px] shrink-0 items-center overflow-hidden border-b border-[#888] bg-[#f0f0f0] pl-[2px]">
      <Grip />
      <IconButton on label="光标"><Tool name="cursor" /></IconButton>
      <IconButton label="十字线"><Tool name="cross" /></IconButton>
      <Divider />
      {['vline', 'hline', 'trend', 'channel', 'fibo'].map((name) => (
        <IconButton key={name} label={name}><Tool name={name} /></IconButton>
      ))}
      <IconButton label="文字">
        <span className="font-['Roboto',sans-serif] text-[16px] font-black leading-5 text-[#555]">A</span>
      </IconButton>
      <IconButton label="标签"><Tool name="label" /></IconButton>
      <IconButton label="箭头"><Tool name="arrows" /></IconButton>
      <span className="flex w-[13px] shrink-0"><Caret /></span>
      <Divider />
      <Grip />
      {frames.map((name, i) => (
        <span key={name} className="flex w-[34px] shrink-0 justify-center">
          <button className={clsx('h-[31px] w-8 text-[12px] font-medium leading-5 text-[#555]', i === 0 && pressed)}>{name}</button>
        </span>
      ))}
      <Divider />
    </div>
  );
}

/* ---------- left dock ---------- */

function DockHeader({ text }: { text: string }) {
  return (
    <div className="flex h-[17px] shrink-0 items-center">
      <h3 className="h-4 min-w-0 flex-1 overflow-hidden whitespace-nowrap bg-linear-to-r from-[#b9c9de] to-[#d8e3f1] pl-[3px] text-[15px] leading-4 text-black">{text}</h3>
      <button aria-label="关闭" className="flex w-[19px] justify-center">
        <svg viewBox="0 0 9 9" className="h-[9px] w-[9px]"><path d="M1 1l7 7M8 1L1 8" stroke="#000" strokeWidth="1.500" /></svg>
      </button>
    </div>
  );
}

function DockTabs({ tabs }: { tabs: string[] }) {
  return (
    <div className="flex h-[26px] shrink-0 overflow-hidden pl-[3px]">
      {tabs.map((tab, i) => (
        <button
          key={tab}
          className={clsx(
            'h-[25px] shrink-0 whitespace-nowrap px-3 text-[15px] leading-6',
            i === 0 ? 'border-b-2 border-l-2 border-r border-black bg-white text-black' : 'border-t-2 border-black text-[#888]',
          )}
        >
          {tab}
        </button>
      ))}
    </div>
  );
}

function Navigator({ win }: { win: WindowData }) {
  const indent = ['pl-[5px]', 'pl-[11px]', 'pl-[37px]', 'pl-[68px]'];
  return (
    <div className="flex min-h-0 flex-1 overflow-hidden border-l border-t border-[#a0a0a0] bg-white">
      <ul className={clsx('relative min-w-0 flex-1 overflow-hidden', win.treeOffset)}>
        <span className={clsx('absolute left-[16px] top-[22px] border-l border-dotted border-[#777]', win.thumb ? 'bottom-0' : 'bottom-[30px]')} />
        {win.tree.map((node, i) => (
          <li key={i} className={clsx('relative flex h-[22px] items-center whitespace-nowrap text-[15px] leading-5', indent[node.level])}>
            {node.level > 0 && node.level < 3 && (
              <>
                {node.sign ? (
                  <span className="flex h-[11px] w-[11px] shrink-0 items-center justify-center border border-[#888] bg-white">
                    <svg viewBox="0 0 7 7" className="h-[7px] w-[7px]"><path d={node.sign === '-' ? 'M0 3.500h7' : 'M0 3.500h7M3.500 0v7'} stroke="#000" /></svg>
                  </span>
                ) : (
                  <span className="ml-[5px] h-[11px] w-[6px] shrink-0 self-start border-b border-l border-dotted border-[#777]" />
                )}
                <span className="h-px w-[7px] shrink-0 border-t border-dotted border-[#777]" />
              </>
            )}
            {node.level === 3 && node.icon && <span className="h-[11px] w-4 shrink-0 self-start border-b border-l border-dotted border-[#777]" />}
            {node.icon && <NodeIcon icon={node.icon} />}
            {node.label && <span className="ml-1">{node.label}</span>}
          </li>
        ))}
      </ul>
      {win.thumb && (
        <div className="mr-px flex w-[21px] shrink-0 flex-col border border-[#c8c8c8] bg-[#fbfbfb]">
          <button aria-label="向上" className="flex h-5 items-center justify-center border-b border-[#c8c8c8]">
            <svg viewBox="0 0 10 6" fill="none" className="h-[6px] w-[10px]"><path d="M1 5l4-4 4 4" stroke="#555" strokeWidth="1.500" /></svg>
          </button>
          <div className={clsx('flex flex-col items-center justify-center gap-[2px] border-y border-[#aaa] bg-[#dadada]', win.thumb)}>
            <span className="h-[2px] w-[9px] bg-[#666]" />
            <span className="h-[2px] w-[9px] bg-[#666]" />
            <span className="h-[2px] w-[9px] bg-[#666]" />
          </div>
          <button aria-label="向下" className="mt-auto flex h-5 items-center justify-center border-t border-[#c8c8c8]">
            <svg viewBox="0 0 10 6" fill="none" className="h-[6px] w-[10px]"><path d="M1 1l4 4 4-4" stroke="#555" strokeWidth="1.500" /></svg>
          </button>
        </div>
      )}
    </div>
  );
}

function Dock({ win }: { win: WindowData }) {
  return (
    <aside className={clsx('flex shrink-0 flex-col border-r-2 border-[#b0b0b0] bg-[#f0f0f0]', win.dock)}>
      <section className={clsx('flex shrink-0 flex-col border-b border-[#a0a0a0] pb-[7px] pl-[5px] pr-[5px] pt-[3px]', win.market)}>
        <DockHeader text={win.marketTitle} />
        <div className="flex-1 overflow-hidden border-l border-t border-[#a0a0a0] bg-white">
          <table className="w-full table-fixed border-collapse text-[15px] leading-5">
            <colgroup>
              {win.marketCols.map((w, i) => (
                <col key={i} className={w} />
              ))}
            </colgroup>
            <thead>
              <tr className="h-[27px]">
                {win.marketHead.map((name, i) => (
                  <th key={i} className="overflow-hidden border-b-2 border-r-2 border-[#e3e3e3] p-0 text-center font-normal">{name}</th>
                ))}
              </tr>
            </thead>
            <tbody>
              <tr className="h-6 bg-[#ffd700]">
                {win.marketRow.map((cell, i) => (
                  <td key={i} className={clsx('overflow-hidden border-r border-[#d9c26a] p-0', i ? 'text-center text-red-600' : 'text-black')}>
                    <span className={clsx(i === 0 && 'flex items-center gap-2 pl-[3px]')}>
                      {i === 0 && (
                        <svg viewBox="0 0 16 14" className="h-[14px] w-4 shrink-0">
                          <path d="M5 1h6v5h4l-7 7-7-7h4z" fill="#e8541a" stroke="#8f2c08" />
                        </svg>
                      )}
                      {cell}
                    </span>
                  </td>
                ))}
              </tr>
            </tbody>
          </table>
        </div>
        <DockTabs tabs={win.marketTabs} />
      </section>
      <section className="flex min-h-0 flex-1 flex-col pb-[6px] pl-[5px] pr-[5px] pt-[3px]">
        <DockHeader text="导航" />
        <Navigator win={win} />
        <DockTabs tabs={win.navTabs} />
      </section>
    </aside>
  );
}

/* ---------- chart ---------- */

const noise = (i: number) => {
  const v = Math.sin(i * 12.9898) * 43758.5453;
  return v - Math.floor(v);
};

const parseMarkers = (source: string): Marker[] =>
  source.split(' ').map((token) => {
    const [x, y] = token.slice(0, -1).split(',').map(Number);
    return { x, y, hue: token.slice(-1) as Hue };
  });

// One bar every two pixels, interpolated between the way points
const barPath = (source: string, spread: number, calmFrom: number) => {
  const points = source.split(' ').map((p) => p.split(',').map(Number));
  let d = '';
  for (let i = 0; i < points.length - 1; i++) {
    const [x1, y1] = points[i];
    const [x2, y2] = points[i + 1];
    for (let x = x1; x < x2; x += 2) {
      const range = x > calmFrom ? spread * 0.7 : spread;
      const y = y1 + ((y2 - y1) * (x - x1)) / (x2 - x1) + (noise(x) - 0.5) * range * 0.5;
      const h = range * (0.35 + noise(x + 7) * 0.75);
      d += `M${x + 0.5} ${Math.round(y - h / 2)}v${Math.round(h)}`;
    }
  }
  return d;
};

const fills: Record<Hue, string> = { b: '#0000ff', r: '#ff0000', w: '#ffffff' };

const arrow = 'M-4-2h3v-3l5 5-5 5v-3h-3z';

function PriceChart({ chart }: { chart: ChartData }) {
  const { frame, grid } = chart;
  const markers = parseMarkers(chart.markers);
  const opened = markers.filter((m) => m.x < chart.target[0] - 15).filter((m, i) => chart.dense || i % 5 < 2);
  const recent = markers.filter((m) => m.x >= chart.target[0] - 15);
  const verticals: number[] = [];
  for (let x = grid.x; x < frame.right; x += 48) verticals.push(x);

  return (
    <svg className="absolute inset-0 h-full w-full" aria-label="XAUUSD.c M1">
      <g transform={`translate(${-chart.origin[0]} ${-chart.origin[1]})`} fontFamily="'Noto Sans', sans-serif" fontSize="12">
        <g stroke="#778899" strokeDasharray="5 3">
          {verticals.map((x) => (
            <path key={x} d={`M${x + 0.5} ${frame.top}V${frame.bottom}`} />
          ))}
          {chart.prices.map((_, i) => (
            <path key={i} d={`M${frame.left} ${grid.y + i * 49 + 0.5}H${frame.right}`} />
          ))}
        </g>

        <path d={`M${frame.left} ${chart.bid.y + 0.5}H${frame.right}`} stroke="#778899" />
        {chart.orderLines.map((y) => (
          <path key={y} d={`M${frame.left} ${y + 0.5}H${frame.right}`} stroke="#32cd32" strokeDasharray="12 4 3 4" />
        ))}

        <g fill="#696969" fontFamily="'Liberation Sans', Arial, sans-serif" fontSize="22" textAnchor="end">
          {chart.lever.map((line, i) => (
            <text key={line} x={frame.right - 11} y={chart.leverY + i * 20}>{line}</text>
          ))}
        </g>

        <g fill="none">
          {opened.map((m, i) => (
            <path key={i} d={`M${m.x} ${m.y}L${chart.target[0]} ${chart.target[1] + ((i * 5) % 9) - 4}`} stroke={m.hue === 'r' ? '#ff0000' : '#0000ff'} strokeDasharray="3 4" />
          ))}
          {chart.fan.map((y, i) => (
            <path key={y} d={`M${frame.left} ${y}L${chart.target[0]} ${chart.target[1] + (i % 3)}`} stroke={i % 3 === 1 ? '#0000ff' : '#ff0000'} strokeWidth="1.500" strokeDasharray="4 3" />
          ))}
          {recent.slice(0, -8).map((m, i) => (
            <path key={i} d={`M${m.x} ${m.y}L${recent[i + 8].x} ${recent[i + 8].y}`} stroke={i % 2 ? '#0000ff' : '#ff0000'} strokeDasharray="3 3" />
          ))}
        </g>

        <g fill="#857367" stroke="#708090">
          {markers.map((m, i) => (
            <circle key={i} cx={m.x} cy={m.y} r="9" />
          ))}
        </g>
        <g fill="#fff" fontSize="12">
          {chart.orderLabels.map((label) => (
            <text key={label.text} x={chart.orderX} y={label.y}>{label.text}</text>
          ))}
        </g>
        <path d={barPath(chart.path, chart.spread, chart.target[0])} stroke="#00ff00" />
        {chart.dense &&
          markers.map((m, i) => (
            <path key={i} d={arrow} transform={`translate(${m.x + (i % 3) - 1} ${m.y + (i % 2 ? 5 : -4)})`} fill="#fff" stroke="#fff" />
          ))}
        {markers.map((m, i) => (
          <path
            key={i}
            d={arrow}
            transform={`translate(${m.x} ${m.y})${i % 4 === 3 && i > 50 ? ' scale(-1 1)' : ''}`}
            fill={fills[m.hue]}
            stroke="#fff"
          />
        ))}

        <path d={`M${frame.left + 0.5} ${frame.bottom + 0.5}V${frame.top + 0.5}H${frame.right + 0.5}V${frame.bottom + 0.5}z`} fill="none" stroke="#fff" />
        <g fill="#fff">
          {chart.prices.map((price, i) => (
            <g key={i}>
              <path d={`M${frame.right} ${grid.y + i * 49 + 0.5}h4`} stroke="#fff" />
              <text x={frame.right + 7} y={grid.y + i * 49 + 5}>{price}</text>
            </g>
          ))}
          {chart.times.map((time, i) => {
            const x = i ? grid.x + 48 + (i - 1) * 96 : chart.timeStart;
            return (
              <g key={time}>
                <path d={`M${x + 0.5} ${frame.bottom}v4`} stroke="#fff" />
                <text x={x - 1} y={frame.bottom + 16}>{time}</text>
              </g>
            );
          })}
        </g>
        <rect x={frame.right + 1} y={chart.bid.y - 7} width="56" height="14" fill="#fff" />
        <text x={frame.right + 7} y={chart.bid.y + 5} fill="#000">{chart.bid.label}</text>
        <path d={`M${frame.left + 4} ${frame.top + 8}h9l-4.500 5z`} fill="#fff" />
      </g>
    </svg>
  );
}

// Chinese runs are set larger than the figures beside them
function Mixed({ text, cjk }: { text: string; cjk: string }) {
  return (
    <>
      {text.split(/([\u4e00-\u9fff]+)/).map((part, i) =>
        i % 2 ? (
          <span key={i} className={clsx("font-['Noto_Sans_CJK_SC',sans-serif] font-light", cjk)}>{part}</span>
        ) : (
          part
        ),
      )}
    </>
  );
}

function StatPanel({ panel }: { panel: PanelData }) {
  const gain = 'text-[#ff0000]';
  return (
    <div className={clsx("absolute flex font-['Liberation_Sans','Noto_Sans_CJK_SC',sans-serif] text-[13px]", panel.place)}>
      <div className="flex w-[18px] shrink-0 flex-col items-start text-[#a9b9d4]">
        {panel.tools.map((tool) =>
          tool === 'move' ? (
            <svg key={tool} viewBox="0 0 16 16" fill="none" className="mb-1 mt-[4px] h-4 w-4">
              <path d="M8 1v14M1 8h14M6 3l2-2 2 2M6 13l2 2 2-2M3 6L1 8l2 2M13 6l2 2-2 2" stroke="#a0a0a0" strokeWidth="1.500" />
            </svg>
          ) : (
            <button key={tool} aria-label={tool} className="mb-[4px] flex h-[15px] w-4 items-center justify-center border border-[#a9b9d4] bg-[#1c1c1c] text-[13px] leading-[13px]">
              {tool === 'restore' ? (
                <svg viewBox="0 0 10 10" fill="none" className="h-[10px] w-[10px]"><path d="M1 4.500h5v4H1zM3.500 4V1.500h5v4H6.500" stroke="#a9b9d4" /></svg>
              ) : (
                tool
              )}
            </button>
          ),
        )}
        <span className="mt-[50px] text-[14px] leading-4 text-[#ffff00] [writing-mode:vertical-rl]">{panel.version}</span>
      </div>

      <div className="w-[361px] self-start border border-[#778899] bg-[#242a33]">
        <div className="relative h-[41px] bg-[#1c1c1c]">
          <p className="h-5 pl-[4px] leading-5 text-[#ffff00]"><Mixed text={panel.title} cjk="text-[16px] leading-[10px]" /></p>
          <a href="#site" className={clsx('absolute top-0 h-5 whitespace-nowrap leading-5 text-[#87cefa]', panel.brandPlace)}>
            <Mixed text={`${panel.brand} ${panel.url}`} cjk="text-[16px] leading-[10px]" />
          </a>
          <div className="flex pl-[13px] text-[15px] leading-5 text-[#6a6a6a]">
            {['综', '日', '周', '月', '季', '年', '巾', 'M', '备', '账户', '轨迹'].map((tab, i) => (
              <button
                key={tab}
                className={clsx('h-5 shrink-0', i < 9 && 'w-[22px]', i === 0 && 'bg-[#242a33] text-[#c0cfe4]', i === 9 && 'ml-1 w-[88px] text-left')}
              >
                {tab}
              </button>
            ))}
          </div>
        </div>
        <table className="w-full table-fixed border-collapse whitespace-nowrap text-left leading-[14px] text-[#b3c2dc]">
          <colgroup>
            <col className="w-[85px]" />
            <col className="w-[50px]" />
            <col className="w-[80px]" />
            <col className="w-[60px]" />
            <col />
          </colgroup>
          <thead>
            <tr className="h-[20px] text-[15px]">
              <th className="p-0" />
              <th className="p-0 font-light">总手数</th>
              <th className="p-0 font-light">盈亏金额</th>
              <th className="p-0 font-light">百分比%</th>
              <th className="p-0 font-light">最大浮亏</th>
            </tr>
          </thead>
          <tbody>
            {panel.rows.map((row, i) => (
              <tr key={row.label} className="h-[14px]">
                <td className="p-0 pl-[5px]"><Mixed text={row.label} cjk="text-[15px] leading-[10px]" /></td>
                <td className={clsx('p-0', i ? gain : panel.accent)}>{row.lots}</td>
                <td className={clsx('p-0', i ? gain : panel.accent)}>{row.profit}</td>
                <td className={clsx('p-0', i ? gain : panel.accent)}>{row.percent}</td>
                <td className={clsx('p-0', panel.accent)}>{row.drawdown}</td>
              </tr>
            ))}
            <tr className="h-[14px] bg-[#1c1c1c]">
              <td colSpan={5} className="p-0 pl-[5px]"><Mixed text="账户持仓汇总" cjk="text-[15px] leading-[10px]" /></td>
            </tr>
            {panel.totals.map((total) => (
              <tr key={total[0]} className={clsx('h-[14px]', panel.accent)}>
                {total.map((cell, i) => (
                  <td key={i} colSpan={i === 3 ? 2 : 1} className={clsx('p-0', i === 0 && 'pl-[5px]')}>
                    <Mixed text={cell} cjk="text-[15px] leading-[10px]" />
                  </td>
                ))}
              </tr>
            ))}
          </tbody>
        </table>
      </div>
    </div>
  );
}

function Chart({ win }: { win: WindowData }) {
  const { frame, origin } = win.chart;
  // distances of the plot's corner from the chart's own edges
  const left = frame.left - origin[0];
  const plot = { left, width: frame.right - frame.left, height: frame.bottom - origin[1] };
  const button =
    "flex h-[30px] w-[55px] items-center justify-center overflow-hidden whitespace-pre border border-white bg-[#696969] font-['DejaVu_Sans_Mono',monospace] text-[22px] leading-7 text-white";

  return (
    <main className="relative mr-px min-w-0 flex-1 overflow-hidden bg-black">
      <PriceChart chart={win.chart} />
      <div className="absolute top-0" style={plot}>
        <ul className="absolute right-[5px] top-[18px] flex flex-col items-end whitespace-pre font-['Liberation_Sans','Noto_Sans_CJK_SC',sans-serif] text-[16px] leading-5 text-[#00ff00]">
          {win.account.map((line) => (
            <li key={line} className="h-5"><Mixed text={line} cjk="text-[17px] leading-[10px]" /></li>
          ))}
        </ul>
        <div className="absolute right-1 top-[5px] flex items-center gap-[5px] text-[12px] leading-5 text-white">
          稳健版黄金
          <svg viewBox="0 0 16 16" fill="none" className="h-4 w-4" stroke="#fff" strokeWidth="1.500">
            <circle cx="8" cy="8" r="6.500" />
            <path d="M4.500 9c1.500 3.500 5.500 3.500 7 0" />
            <path d="M5.800 5v2M10.200 5v2" strokeWidth="1.800" />
          </svg>
        </div>
        <div className="absolute -bottom-px left-px flex flex-col gap-[10px]">
          <button className={clsx(button, 'ml-[30px]')}>Close</button>
          <div className="flex gap-[5px]">
            <button className={button}>C buy</button>
            <button className={button}>C sel</button>
          </div>
        </div>
      </div>
      <StatPanel panel={win.panel} />
      <div className="absolute left-[6px] top-[6px] whitespace-nowrap text-[12px] leading-[14px] text-white">
        <p className="pl-[15px]">{win.symbol}</p>
        <p className="flex">
          <span className="w-[106px]">{win.ticket}</span>
          <span>{win.clock}</span>
        </p>
      </div>
    </main>
  );
}

/* ---------- terminal ---------- */

function TerminalPane({ terminal }: { terminal: Terminal }) {
  const last = terminal.columns.length - 1;
  return (
    <section className="flex min-h-0 flex-1 border-t border-[#c8c8c8] bg-[#f0f0f0]">
      <div className="flex w-[21px] shrink-0 flex-col items-center pt-[8px]">
        <button aria-label="关闭">
          <svg viewBox="0 0 9 9" className="h-[9px] w-[9px]"><path d="M1 1l7 7M8 1L1 8" stroke="#000" strokeWidth="1.500" /></svg>
        </button>
        <span className="mt-[6px] flex min-h-0 w-4 flex-1 items-end overflow-hidden bg-linear-to-b from-[#cfdeef] to-[#a8bfdc] text-[14px] leading-4">
          {terminal.tabs.length > 0 && <span className="rotate-180 [writing-mode:vertical-rl]">终端</span>}
        </span>
      </div>
      <div className="mr-[6px] mt-[6px] flex min-w-0 flex-1 flex-col border-l border-t border-[#909090] bg-white">
        <div className="min-h-0 flex-1 overflow-hidden">
          <table className="w-full table-fixed border-separate border-spacing-0 whitespace-nowrap text-[15px] leading-5 text-black">
            <colgroup>
              {terminal.columns.map((column, i) => (
                <col key={i} className={column.width} />
              ))}
            </colgroup>
            <thead>
              <tr className="h-[25px] bg-[#fbfbfb]">
                {terminal.columns.map((column, i) => (
                  <th
                    key={i}
                    className={clsx('overflow-hidden border-b-2 border-r-2 border-[#dcdcdc] p-0 font-normal', i ? 'pr-[5px] text-right' : 'pl-[5px] text-left')}
                  >
                    {column.name}
                    {i === 0 && <span className="pl-3 text-[10px] text-[#999]">⁄</span>}
                  </th>
                ))}
              </tr>
            </thead>
            <tbody>
              {terminal.rows.map((row, n) => (
                <tr key={n} className={clsx('h-[25px]', n % 2 && 'bg-[#ebebeb]')}>
                  {row.map((cell, i) => (
                    <td key={i} className="overflow-hidden border-b border-r border-[#c9c9c9] p-0 pr-[3px] text-right">
                      {i === 0 || i === last ? (
                        <span className={clsx('flex items-center', i ? 'justify-end gap-[9px]' : 'gap-[5px] pl-[2px]')}>
                          {i === 0 && (
                            <svg viewBox="0 0 20 20" fill="none" className="h-5 w-5 shrink-0">
                              <path d="M2.500 1.500h8l4 4v13h-12z" fill="#fff" stroke="#777" strokeWidth="1.500" />
                              <path d="M10.500 1.500v4h4" stroke="#777" />
                              <circle cx="14.500" cy="14.500" r="4.500" fill={row[2] === 'buy' ? '#1f8fe0' : '#e2441c'} stroke={row[2] === 'buy' ? '#0d5fa3' : '#8f2c08'} />
                            </svg>
                          )}
                          {cell}
                          {i === last && (
                            <button aria-label="平仓">
                              <svg viewBox="0 0 14 12" className="mr-[3px] h-3 w-[14px]"><path d="M1 0l12 12M13 0L1 12" stroke="#9a9a9a" strokeWidth="1.800" /></svg>
                            </button>
                          )}
                        </span>
                      ) : (
                        cell
                      )}
                    </td>
                  ))}
                </tr>
              ))}
              <tr className="h-[25px] bg-[#c8c8c8]">
                <td colSpan={terminal.columns.length} className="relative overflow-hidden p-0 font-bold">
                  <span className="flex items-center gap-[7px] whitespace-pre pl-[3px]">
                    <svg viewBox="0 0 16 18" className="h-[18px] w-4 shrink-0">
                      <rect x=".75" y=".75" width="14.500" height="16.500" rx="1" fill="#fff" stroke="#777" strokeWidth="1.500" />
                      <path d="M6 4h4v5h3l-5 5-5-5h3z" fill="#e8541a" stroke="#8f2c08" />
                    </svg>
                    {terminal.summary}
                  </span>
                  <span className="absolute right-[30px] top-[2px]">{terminal.total}</span>
                </td>
              </tr>
            </tbody>
          </table>
        </div>
        {terminal.tabs.length > 0 && (
          <nav className="flex h-[23px] shrink-0 overflow-hidden bg-[#f0f0f0] text-[15px] leading-5">
            {terminal.tabs.map((tab, i) => (
              <button
                key={tab.name}
                className={clsx('shrink-0 whitespace-nowrap', i ? 'border-t-2 border-black text-[#777]' : 'bg-white pr-[3px] text-black')}
              >
                <span className={clsx('flex h-5 px-3', i > 0 && 'border-r border-[#888]')}>
                  {tab.name}
                  {tab.count && <b className="pl-[3px] pt-[4px] text-[12px] leading-4 text-red-600">{tab.count}</b>}
                </span>
              </button>
            ))}
            <span className="flex-1 border-t-2 border-black" />
          </nav>
        )}
      </div>
    </section>
  );
}

function TradeWindow({ win }: { win: WindowData }) {
  return (
    <article
      className={clsx(
        'relative flex min-w-0 flex-col border-t',
        win.active ? 'border-[#66cbea] bg-[#66cbea]' : 'border-r border-[#56646c] bg-[#c4d5dd]',
        win.shell,
      )}
    >
      <TitleBar title={win.title} active={win.active} />
      <div className={clsx('ml-2 flex min-h-0 flex-1 flex-col', win.active ? 'mr-[9px]' : 'mr-2')}>
        <MenuBar active={win.active} />
        <MainToolbar />
        <DrawToolbar />
        <div className={clsx('flex shrink-0', win.body)}>
          <Dock win={win} />
          <Chart win={win} />
        </div>
        <TerminalPane terminal={win.terminal} />
      </div>
    </article>
  );
}

export default function App() {
  return (
    <div className="relative flex h-screen overflow-hidden bg-[#2d2d2d] font-['Noto_Sans','Noto_Sans_CJK_SC',sans-serif]">
      <div className="absolute left-[-7px] top-[6px] flex gap-[24px] whitespace-nowrap text-[15px] leading-6 text-white">
        <span>XMT5</span>
        <span>terminal - 快</span>
      </div>
      <svg viewBox="0 0 50 3" className="absolute left-[76px] top-0 h-[3px] w-[50px]">
        <path d="M0 0h18v3H0z" fill="#d8dde6" />
        <path d="M18 0h9l-4 3h-5z" fill="#c9c04a" />
        <path d="M30 0h18l-5 3h-9z" fill="#2f86b8" />
      </svg>
      <svg viewBox="0 0 12 24" className="absolute bottom-0 left-[1542px] h-6 w-3">
        <path d="M1 0l5 20 5-20v8L7 24H5L1 8z" fill="#e8e8e8" />
      </svg>
      {windows.map((win) => (
        <TradeWindow key={win.title} win={win} />
      ))}
    </div>
  );
}
